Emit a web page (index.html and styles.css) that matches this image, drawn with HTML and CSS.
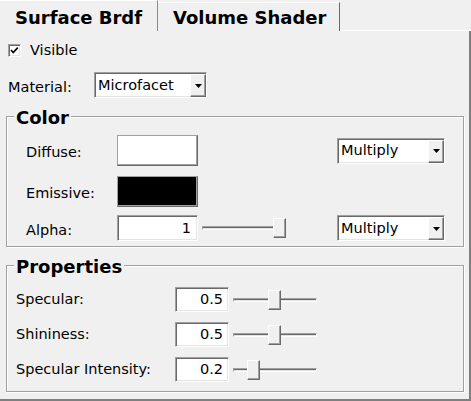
FILE: index.html
```html
<!DOCTYPE html>
<html>
<head>
<meta charset="utf-8">
<title>Surface Brdf</title>
<link rel="stylesheet" href="styles.css">
</head>
<body>
<div class="tabs">
  <div class="tab tab-active">Surface Brdf</div>
  <div class="tab tab-inactive">Volume Shader</div>
  <div class="tab-fill"></div>
</div>
<div class="panel">
  <div class="row-check">
    <span class="checkbox sunken"><svg width="11" height="11" viewBox="0 0 11 11"><polyline points="2,5 4.2,7.5 8.8,2.6" fill="none" stroke="#000" stroke-width="1.6"/></svg></span>
    <span class="check-label">Visible</span>
  </div>
  <div class="row-material">
    <span class="mat-label">Material:</span>
    <div class="combo sunken combo-material"><span class="combo-text">Microfacet</span><span class="combo-btn"><svg width="7" height="4" viewBox="0 0 7 4"><polygon points="0,0 7,0 3.5,4" fill="#000"/></svg></span></div>
  </div>

  <div class="group group-color">
    <div class="group-title">Color</div>
    <div class="crow crow-1">
      <span class="lbl-low">Diffuse:</span>
      <div class="swatch swatch-white"></div>
      <div></div>
      <div class="combo sunken"><span class="combo-text">Multiply</span><span class="combo-btn"><svg width="7" height="4" viewBox="0 0 7 4"><polygon points="0,0 7,0 3.5,4" fill="#000"/></svg></span></div>
    </div>
    <div class="crow crow-2">
      <span class="lbl-low">Emissive:</span>
      <div class="swatch swatch-black"></div>
      <div></div>
      <div></div>
    </div>
    <div class="crow crow-3">
      <span class="lbl-low">Alpha:</span>
      <div class="field sunken field-alpha">1</div>
      <div class="slider slider-alpha"><div class="track"></div><div class="thumb" style="margin-left:71px"></div></div>
      <div class="combo sunken"><span class="combo-text">Multiply</span><span class="combo-btn"><svg width="7" height="4" viewBox="0 0 7 4"><polygon points="0,0 7,0 3.5,4" fill="#000"/></svg></span></div>
    </div>
  </div>

  <div class="group group-props">
    <div class="group-title">Properties</div>
    <div class="props">
      <div class="prow">
        <span>Specular:</span>
        <div class="field sunken field-prop">0.5</div>
        <div class="slider slider-prop"><div class="track"></div><div class="thumb" style="margin-left:35px"></div></div>
      </div>
      <div class="prow">
        <span>Shininess:</span>
        <div class="field sunken field-prop">0.5</div>
        <div class="slider slider-prop"><div class="track"></div><div class="thumb" style="margin-left:35px"></div></div>
      </div>
      <div class="prow">
        <span>Specular Intensity:</span>
        <div class="field sunken field-prop">0.2</div>
        <div class="slider slider-prop"><div class="track"></div><div class="thumb" style="margin-left:14px"></div></div>
      </div>
    </div>
  </div>
</div>
</body>
</html>
```
FILE: styles.css
```css
* { box-sizing: border-box; }
html, body { margin: 0; padding: 0; }
body {
  width: 471px;
  height: 401px;
  overflow: hidden;
  background: #f0f0f0;
  font-family: "DejaVu Sans", "Liberation Sans", sans-serif;
  font-size: 14.5px;
  line-height: 17px;
  color: #000;
}

/* tabs */
.tabs { display: flex; height: 31px; }
.tab {
  font-weight: bold;
  font-size: 18px;
  line-height: 20px;
  padding-left: 15px;
  white-space: nowrap;
}
.tab-active {
  width: 158px;
  padding-top: 7px;
  border-top: 1px solid #fff;
  border-right: 1px solid #8a8a8a;
}
.tab-inactive {
  width: 182px;
  margin-top: 2px;
  padding-top: 5px;
  border-top: 1px solid #fff;
  border-right: 1px solid #696969;
}
.tab-fill { flex: 1; border-bottom: 1px solid #fff; }

.panel {
  height: 370px;
  padding-top: 11px;
  border-right: 2px solid #7f7f7f;
  border-bottom: 2px solid #7f7f7f;
}

/* shared bevels */
.sunken {
  border: 1px solid;
  border-color: #a0a0a0 #fff #fff #a0a0a0;
  box-shadow: inset 1px 1px 0 #696969, inset -1px -1px 0 #e3e3e3;
  background: #fff;
}

.row-check {
  display: flex;
  align-items: center;
  height: 17px;
  padding-left: 8px;
}
.checkbox {
  width: 13px;
  height: 13px;
  display: flex;
}
.check-label { margin-left: 9px; }

.row-material {
  display: flex;
  align-items: center;
  height: 26px;
  margin-top: 13px;
  padding-left: 8px;
}
.mat-label { width: 86px; padding-top: 4px; }

.combo {
  display: flex;
  align-items: center;
  height: 26px;
  white-space: nowrap;
}
.combo-material { width: 113px; }
.combo-text { flex: 1; padding-left: 3px; }
.combo-btn {
  width: 16px;
  height: 23px;
  margin-top: 1px;
  align-self: flex-start;
  display: flex;
  align-items: center;
  justify-content: center;
  background: #f0f0f0;
  border: 1px solid;
  border-color: #fff #696969 #696969 #fff;
  box-shadow: inset -1px -1px 0 #a0a0a0;
}

/* group boxes */
.group {
  margin: 0 5px 0 6px;
  border: 1px solid #a0a0a0;
  box-shadow: 1px 1px 0 #fff, inset 1px 1px 0 #fff;
}
.group-title {
  font-weight: bold;
  font-size: 18px;
  line-height: 20px;
  margin: -9px 0 0 7px;
  padding: 0 2px;
  width: fit-content;
  background: #f0f0f0;
}
.group-color { margin-top: 18px; padding-bottom: 5px; }
.group-props { margin-top: 18px; padding-bottom: 9px; }

.crow {
  display: grid;
  grid-template-columns: 91px 81px 1fr 108px;
  align-items: center;
  padding: 0 18px 0 19px;
}
.crow-1 { margin-top: 7px; height: 31px; }
.crow-2 { margin-top: 10px; height: 31px; }
.crow-3 { margin-top: 8px; height: 26px; }
.lbl-low { padding-top: 4px; }

.swatch {
  height: 31px;
  border: 1px solid;
  border-color: #a0a0a0 #696969 #696969 #a0a0a0;
  box-shadow: inset -1px -1px 0 #a0a0a0;
}
.swatch-white { background: #fff; }
.swatch-black { background: #000; }

.field {
  display: flex;
  align-items: center;
  justify-content: flex-end;
}
.field-alpha { height: 26px; padding-right: 6px; }
.field-prop { height: 25px; padding-right: 5px; }

.slider {
  display: grid;
  align-items: center;
  width: 84px;
  height: 20px;
}
.slider > .track, .slider > .thumb { grid-area: 1 / 1; }
.track {
  height: 4px;
  border: 1px solid;
  border-color: #a0a0a0 #fff #fff #a0a0a0;
  background: linear-gradient(#696969 50%, #e3e3e3 50%);
}
.thumb {
  width: 13px;
  height: 20px;
  background: #f0f0f0;
  border: 1px solid;
  border-color: #fff #696969 #696969 #fff;
  box-shadow: inset -1px -1px 0 #a0a0a0;
}
.slider-alpha { margin-left: 4px; }
.slider-prop { margin-left: 4px; }

.props { margin-top: 10px; padding-left: 9px; }
.prow {
  display: grid;
  grid-template-columns: 159px 54px auto;
  align-items: center;
  height: 25px;
  margin-top: 10px;
}
.prow:first-child { margin-top: 0; }
```
